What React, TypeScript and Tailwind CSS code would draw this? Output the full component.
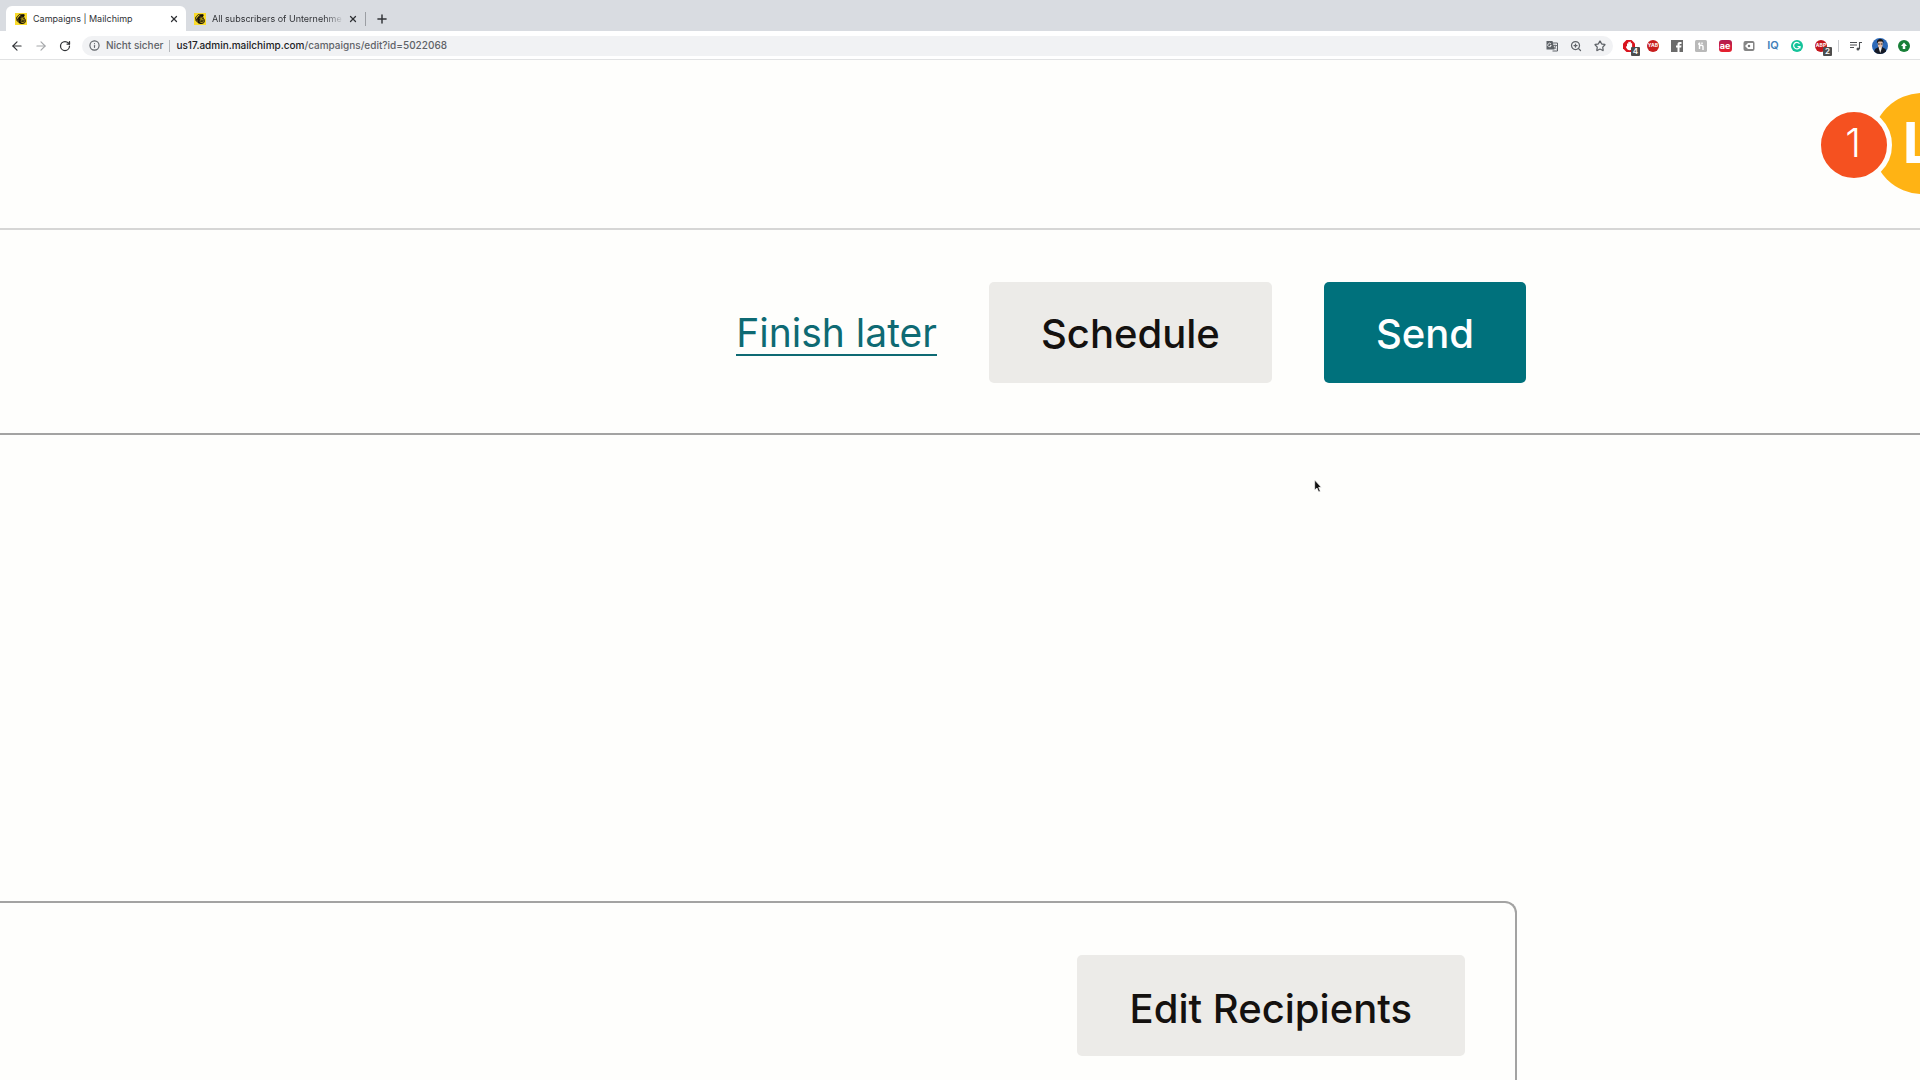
import { ArrowLeft, ArrowRight, Info, Plus, RotateCw, Star, X, ZoomIn } from "lucide-react";
import type { ReactNode } from "react";
import { SiMailchimp } from "react-icons/si";

const tabs = [
  { title: "Campaigns | Mailchimp", active: true },
  { title: "All subscribers of Unternehme", active: false },
];

function Favicon() {
  return (
    <span className="flex size-3 shrink-0 items-center justify-center bg-[#fbdc2c] text-[#17110a]">
      <SiMailchimp className="size-[10px]" stroke="currentColor" strokeWidth={1} />
    </span>
  );
}

function ToolButton({ label, children }: { label: string; children: ReactNode }) {
  return (
    <button type="button" aria-label={label} className="flex h-5 w-6 shrink-0 items-center justify-center">
      {children}
    </button>
  );
}

function Counter({ value }: { value: string }) {
  return (
    <span className="absolute -right-[5px] -bottom-1 flex size-[9px] items-center justify-center rounded-[1px] bg-[#4d4d4d] text-[8px] leading-2 font-semibold text-white">
      {value}
    </span>
  );
}

function Extensions() {
  return (
    <div className="ml-1 flex items-center">
      <ToolButton label="AdBlock">
        <span className="relative">
          <svg viewBox="0 0 24 24" className="size-3">
            <path d="M7 0h10l7 7v10l-7 7H7l-7-7V7z" fill="#d9141e" />
            <path d="M8 13V7.500a1.300 1.300 0 0 1 2.500 0V5a1.300 1.300 0 0 1 2.600 0v-.5a1.300 1.300 0 0 1 2.600 0V7a1.300 1.300 0 0 1 2.500 0v8c0 4-2 5.500-5 5.500-3.500 0-5-2-7.500-6.500 0-1.500 1.500-2 2.300-1z" fill="#fff" />
          </svg>
          <Counter value="4" />
        </span>
      </ToolButton>
      <ToolButton label="YAB">
        <span className="flex size-3 items-center justify-center rounded-full bg-[#c81e1e] text-[5px] leading-none font-bold text-white">
          YAB
        </span>
      </ToolButton>
      <ToolButton label="Facebook">
        <svg viewBox="0 0 24 24" className="size-3">
          <rect width="24" height="24" fill="#6b6b6b" />
          <path d="M13 24v-9h-3v-4h3V8.500C13 5.500 14.800 4 17.500 4H21v4h-2.300C17.500 8 17 8.500 17 9.500V11h4l-.6 4H17v9z" fill="#fff" />
        </svg>
      </ToolButton>
      <ToolButton label="Honey">
        <svg viewBox="0 0 24 24" className="size-3">
          <rect width="24" height="24" rx="3" fill="#b9b9b9" />
          <path d="M9 18V5M9 12c1-2 7-2 7 1v7M14 5v3M6 8h4" fill="none" stroke="#fff" strokeWidth="2.800" />
        </svg>
      </ToolButton>
      <ToolButton label="AliExpress">
        <span className="flex h-3 w-[13px] items-center justify-center rounded-[3px] bg-linear-to-b from-[#b01c4e] to-[#e8212b] text-[9px] leading-none font-bold text-white">
          ae
        </span>
      </ToolButton>
      <ToolButton label="Price tag">
        <svg viewBox="0 0 24 24" className="size-3">
          <rect x="1" y="2" width="22" height="20" rx="4" fill="#858585" />
          <path d="M10 6h10v12H10l-6-6z" fill="#fff" />
          <circle cx="12" cy="12" r="2.500" fill="#777" />
        </svg>
      </ToolButton>
      <ToolButton label="vidIQ">
        <span className="text-[11px] leading-none font-semibold text-[#4280b8]">IQ</span>
      </ToolButton>
      <ToolButton label="Grammarly">
        <svg viewBox="0 0 24 24" className="size-3">
          <circle cx="12" cy="12" r="12" fill="#15c39a" />
          <path d="M17 7.500A6.500 6.500 0 1 0 18 13h-5M18 12.500V17" fill="none" stroke="#fff" strokeWidth="2.400" />
        </svg>
      </ToolButton>
      <ToolButton label="Adblock Plus">
        <span className="relative">
          <span className="flex size-3 items-center justify-center rounded-full bg-[#c4161c] text-[5px] leading-none font-bold text-white">
            ABP
          </span>
          <Counter value="2" />
        </span>
      </ToolButton>
      <span className="mx-[5px] h-3 w-px bg-[#c9cbce]" />
      <ToolButton label="Media controls">
        <svg viewBox="0 0 24 20" className="h-[10px] w-3" fill="none" stroke="#4c4f53" strokeWidth="2.200">
          <path d="M0 3h14M0 8h14M0 13h8M19 16V3h5" />
          <circle cx="16" cy="16" r="3" fill="#4c4f53" stroke="none" />
        </svg>
      </ToolButton>
      <ToolButton label="Profile">
        <svg viewBox="0 0 32 32" className="size-4 rounded-full">
          <rect width="32" height="32" fill="#2c69b8" />
          <path d="M3 32l3-10 7-4h7l7 4 3 10z" fill="#151a26" />
          <path d="M13 17h7l-1 5-2.500 8L14 22z" fill="#f4f1ee" />
          <ellipse cx="16.500" cy="12" rx="5" ry="7" fill="#e6bda6" />
          <path d="M10 11c-1-7 3-9 7-9s7 3 6 9l-2-4h-8z" fill="#1d1917" />
          <path d="M12 12h3.500M17.500 12H21" stroke="#222" strokeWidth="2" />
        </svg>
      </ToolButton>
      <ToolButton label="Update">
        <svg viewBox="0 0 24 24" className="size-3">
          <circle cx="12" cy="12" r="12" fill="#188038" />
          <path d="M12 5l6 7h-3.500v6h-5v-6H6z" fill="#fff" />
        </svg>
      </ToolButton>
    </div>
  );
}

function BrowserBar() {
  return (
    <div className="text-[#303236]">
      {/* Tab strip */}
      <div className="flex h-[31px] items-end bg-[#d9dce1] pl-[6px]">
        {tabs.map((tab) => (
          <div
            key={tab.title}
            className={
              tab.active
                ? "flex h-[25px] w-[180px] items-center rounded-t-md bg-white pr-[7px] pl-[9px]"
                : "flex h-[25px] w-[179px] items-center pr-[7px] pl-2"
            }
          >
            <Favicon />
            <span
              className={
                tab.active
                  ? "ml-[6px] flex-1 text-[9px] whitespace-nowrap"
                  : "ml-[6px] flex-1 mask-r-from-85% text-[9px] whitespace-nowrap"
              }
            >
              {tab.title}
            </span>
            <button type="button" aria-label="Close tab" className="ml-1">
              <X className="size-[10px]" strokeWidth={3} />
            </button>
          </div>
        ))}
        <span className="mb-[5px] h-[14px] w-px bg-[#9b9ea3]" />
        <button type="button" aria-label="New tab" className="mb-[5px] ml-[9px]">
          <Plus className="size-[14px]" strokeWidth={2.5} />
        </button>
      </div>

      {/* Toolbar */}
      <div className="flex h-[29px] items-center border-b border-[#e1e2e3] bg-white pt-px pr-1 pl-[5px]">
        <ToolButton label="Back">
          <ArrowLeft className="size-[14px]" />
        </ToolButton>
        <ToolButton label="Forward">
          <ArrowRight className="size-[14px] text-[#a5a7aa]" />
        </ToolButton>
        <ToolButton label="Reload">
          <RotateCw className="size-3" strokeWidth={2.5} />
        </ToolButton>
        <div className="ml-[5px] flex h-5 flex-1 items-center rounded-full bg-[#f1f2f4] pr-px pl-[7px] text-[10px] font-medium text-[#5f6368]">
          <Info className="size-[11px]" strokeWidth={2.5} />
          <span className="ml-[6px] whitespace-nowrap">Nicht sicher</span>
          <span className="mx-[6px] h-3 w-px bg-[#b5b8bc]" />
          <p className="flex-1">
            <span className="text-[#202124]">us17.admin.mailchimp.com</span>/campaigns/edit?id=5022068
          </p>
          <ToolButton label="Translate">
            <svg viewBox="0 0 24 24" className="size-3">
              <path d="M1 2h12l4 17H1z" fill="#5f6368" />
              <path d="M11 6h12v16H13" fill="none" stroke="#5f6368" strokeWidth="2" />
              <path d="M10 8a3.500 3.500 0 1 0 .5 3H8" fill="none" stroke="#fff" strokeWidth="1.600" />
              <path d="M14 11h8M18 9v2M20 11c-.5 3-2 5-4 7M16 13c1 2 2 3.500 5 5" fill="none" stroke="#5f6368" strokeWidth="1.600" />
            </svg>
          </ToolButton>
          <ToolButton label="Zoom">
            <ZoomIn className="size-3" strokeWidth={2.5} />
          </ToolButton>
          <ToolButton label="Bookmark">
            <Star className="size-3" strokeWidth={2.5} />
          </ToolButton>
        </div>
        <Extensions />
      </div>
    </div>
  );
}

export default function App() {
  return (
    <div className="relative flex min-h-screen flex-col overflow-hidden bg-[#fefefc] font-['Inter',sans-serif]">
      <BrowserBar />

      {/* Account header */}
      <header className="flex h-[170px] items-center justify-end border-b-2 border-[#d6d6d5] pb-[2px]">
        <button
          type="button"
          aria-label="Account"
          className="relative -mr-[53px] flex size-[101px] items-center justify-center rounded-full bg-[#ffb314] pr-2 text-[56px] font-bold text-white"
        >
          L
          <span className="absolute top-[14px] -left-14 flex size-[76px] items-center justify-center rounded-full border-5 border-[#fefefc] bg-[#f55120] pr-[2px] pb-1 text-[40px] leading-[48px] font-light">
            1
          </span>
        </button>
      </header>

      {/* Campaign actions */}
      <div className="flex items-center justify-end gap-[52px] border-b-2 border-[#a3a3a2] pt-[52px] pr-[394px] pb-[50px]">
        <a href="#" className="mt-[2px] border-b-2 border-[#0e6a73] text-[39px] leading-[42px] text-[#0e6a73]">
          Finish later
        </a>
        <button type="button" className="h-[101px] rounded-[5px] bg-[#ecebe8] px-[52px] pt-[2px] text-[40px] font-medium text-[#14110f]">
          Schedule
        </button>
        <button type="button" className="h-[101px] rounded-[5px] bg-[#00717c] px-[52px] pt-[2px] text-[40px] font-medium text-white">
          Send
        </button>
      </div>

      {/* Recipients card */}
      <section className="mt-[466px] mr-[403px] flex flex-1 items-start justify-end rounded-tr-xl border-t-2 border-r-2 border-[#a3a3a2] pt-[52px] pr-[50px] pb-6">
        <button type="button" className="h-[101px] rounded-[5px] bg-[#ecebe8] px-[53px] pt-[6px] text-[40px] font-medium text-[#14110f]">
          Edit Recipients
        </button>
      </section>

      {/* Mouse pointer */}
      <svg viewBox="0 0 12 20" className="absolute top-[479px] left-[1314px] h-[14px] w-2" aria-hidden="true">
        <path d="M1 1v15l3.500-3 2.500 6 2.500-1-2.500-6H11z" fill="#111" stroke="#fff" strokeWidth="1" />
      </svg>
    </div>
  );
}
